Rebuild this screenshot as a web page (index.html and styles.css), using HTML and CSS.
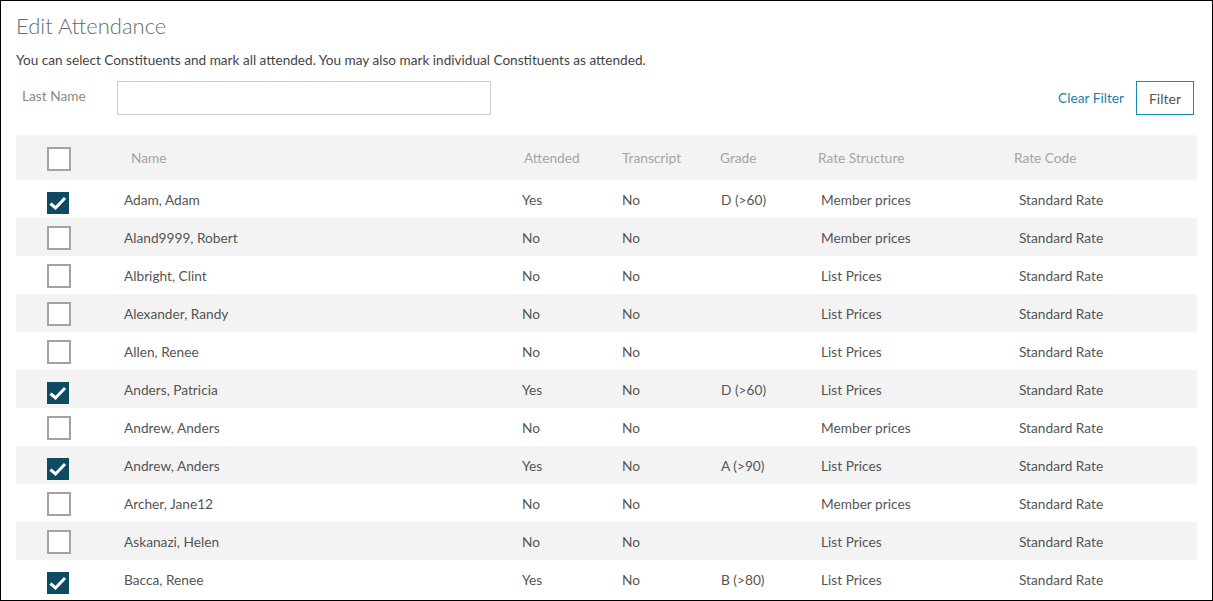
FILE: index.html
```html
<!DOCTYPE html>
<html lang="en">
<head>
    <meta charset="UTF-8">
    <title>Edit Attendance</title>
    <link rel="stylesheet" href="styles.css">
</head>
<body>

<div class="page">
    <h1>Edit Attendance</h1>
    <p class="intro">You can select Constituents and mark all attended. You may also mark individual Constituents as attended.</p>

    <div class="filter-bar">
        <label class="filter-label" for="last-name">Last Name</label>
        <input type="text" id="last-name" class="filter-input">
        <div class="filter-actions">
            <a href="#" class="clear-link">Clear Filter</a>
            <button class="filter-btn">Filter</button>
        </div>
    </div>

    <table class="attendance">
        <colgroup>
            <col class="c-check">
            <col class="c-name">
            <col class="c-att">
            <col class="c-trans">
            <col class="c-grade">
            <col class="c-struct">
            <col class="c-code">
        </colgroup>
        <thead>
            <tr>
                <th><span class="box"></span></th>
                <th class="h-name">Name</th>
                <th class="h-att">Attended</th>
                <th class="h-trans">Transcript</th>
                <th class="h-grade">Grade</th>
                <th class="h-struct">Rate Structure</th>
                <th class="h-code">Rate Code</th>
            </tr>
        </thead>
        <tbody>
            <tr>
                <td><span class="box checked"><svg viewBox="0 0 22 22"><polyline points="4.5,12.5 8.5,16 17,7"/></svg></span></td>
                <td>Adam, Adam</td><td>Yes</td><td>No</td><td>D (&gt;60)</td><td>Member prices</td><td>Standard Rate</td>
            </tr>
            <tr>
                <td><span class="box"></span></td>
                <td>Aland9999, Robert</td><td>No</td><td>No</td><td></td><td>Member prices</td><td>Standard Rate</td>
            </tr>
            <tr>
                <td><span class="box"></span></td>
                <td>Albright, Clint</td><td>No</td><td>No</td><td></td><td>List Prices</td><td>Standard Rate</td>
            </tr>
            <tr>
                <td><span class="box"></span></td>
                <td>Alexander, Randy</td><td>No</td><td>No</td><td></td><td>List Prices</td><td>Standard Rate</td>
            </tr>
            <tr>
                <td><span class="box"></span></td>
                <td>Allen, Renee</td><td>No</td><td>No</td><td></td><td>List Prices</td><td>Standard Rate</td>
            </tr>
            <tr>
                <td><span class="box checked"><svg viewBox="0 0 22 22"><polyline points="4.5,12.5 8.5,16 17,7"/></svg></span></td>
                <td>Anders, Patricia</td><td>Yes</td><td>No</td><td>D (&gt;60)</td><td>List Prices</td><td>Standard Rate</td>
            </tr>
            <tr>
                <td><span class="box"></span></td>
                <td>Andrew, Anders</td><td>No</td><td>No</td><td></td><td>Member prices</td><td>Standard Rate</td>
            </tr>
            <tr>
                <td><span class="box checked"><svg viewBox="0 0 22 22"><polyline points="4.5,12.5 8.5,16 17,7"/></svg></span></td>
                <td>Andrew, Anders</td><td>Yes</td><td>No</td><td>A (&gt;90)</td><td>List Prices</td><td>Standard Rate</td>
            </tr>
            <tr>
                <td><span class="box"></span></td>
                <td>Archer, Jane12</td><td>No</td><td>No</td><td></td><td>Member prices</td><td>Standard Rate</td>
            </tr>
            <tr>
                <td><span class="box"></span></td>
                <td>Askanazi, Helen</td><td>No</td><td>No</td><td></td><td>List Prices</td><td>Standard Rate</td>
            </tr>
            <tr>
                <td><span class="box checked"><svg viewBox="0 0 22 22"><polyline points="4.5,12.5 8.5,16 17,7"/></svg></span></td>
                <td>Bacca, Renee</td><td>Yes</td><td>No</td><td>B (&gt;80)</td><td>List Prices</td><td>Standard Rate</td>
            </tr>
        </tbody>
    </table>
</div>

</body>
</html>
```

FILE: styles.css
```css
html, body {
    margin: 0;
    padding: 0;
    height: 100%;
}
body {
    font-family: Lato, "Open Sans", sans-serif;
    font-size: 13.7px;
    color: #555;
    background: white;
    overflow: hidden;
}
.page {
    box-sizing: border-box;
    height: 601px;
    border: 1px solid #000;
    padding: 11px 15px 0 15px;
    overflow: hidden;
}
h1 {
    margin: 0;
    font-size: 22px;
    font-weight: 300;
    color: #6b6b6b;
    line-height: 28px;
}
.intro {
    margin: 12px 0 0 0;
    font-size: 13.6px;
    line-height: 16px;
    color: #444;
}
.filter-bar {
    display: flex;
    align-items: center;
    margin-top: 13px;
    height: 34px;
}
.filter-label {
    color: #8a8a8a;
    width: 95px;
    padding-left: 6px;
    margin-top: -6px;
}
.filter-input {
    box-sizing: border-box;
    width: 374px;
    height: 34px;
    border: 1px solid #ccc;
    margin: 0;
    padding: 0 8px;
    font: inherit;
}
.filter-actions {
    margin-left: auto;
    margin-right: 3px;
    display: flex;
    align-items: center;
    gap: 12px;
}
.clear-link {
    color: #1d7fab;
    text-decoration: none;
    margin-top: -1px;
}
.filter-btn {
    box-sizing: border-box;
    width: 58px;
    height: 34px;
    border: 1px solid #168bb3;
    background: white;
    color: #555;
    font-family: inherit;
    font-size: 14px;
    padding: 0;
}
.attendance {
    margin-top: 20px;
    width: 1181px;
    border-collapse: collapse;
    table-layout: fixed;
}
.c-check { width: 108px; }
.c-name { width: 398px; }
.c-att { width: 100px; }
.c-trans { width: 99px; }
.c-grade { width: 100px; }
.c-struct { width: 198px; }
.c-code { width: 178px; }

.attendance th {
    background: #f3f3f3;
    height: 45px;
    padding: 0;
    text-align: left;
    font-weight: normal;
    color: #a5a5a5;
    vertical-align: middle;
}
.attendance th:first-child .box {
    margin-top: 3px;
}
.h-name { text-indent: 7px; }
.h-att { text-indent: 2px; }
.h-grade { text-indent: -1px; }
.h-struct { text-indent: -3px; }
.h-code { text-indent: -5px; }

.attendance td {
    height: 37px;
    padding: 1px 0 0 0;
    vertical-align: middle;
    color: #555;
}
.attendance tbody tr:nth-child(even) td {
    background: #f3f3f3;
}
.attendance td:first-child,
.attendance th:first-child {
    padding-left: 31px;
}
.box {
    display: block;
    box-sizing: border-box;
    width: 24px;
    height: 24px;
    border: 2px solid #a3a3a3;
    background: white;
}
.box.checked {
    width: 22px;
    height: 22px;
    border: none;
    background: #0e4a62;
    margin-top: 6px;
}
.box svg {
    display: block;
    width: 22px;
    height: 22px;
}
.box polyline {
    fill: none;
    stroke: white;
    stroke-width: 3;
    stroke-linecap: square;
}
```
